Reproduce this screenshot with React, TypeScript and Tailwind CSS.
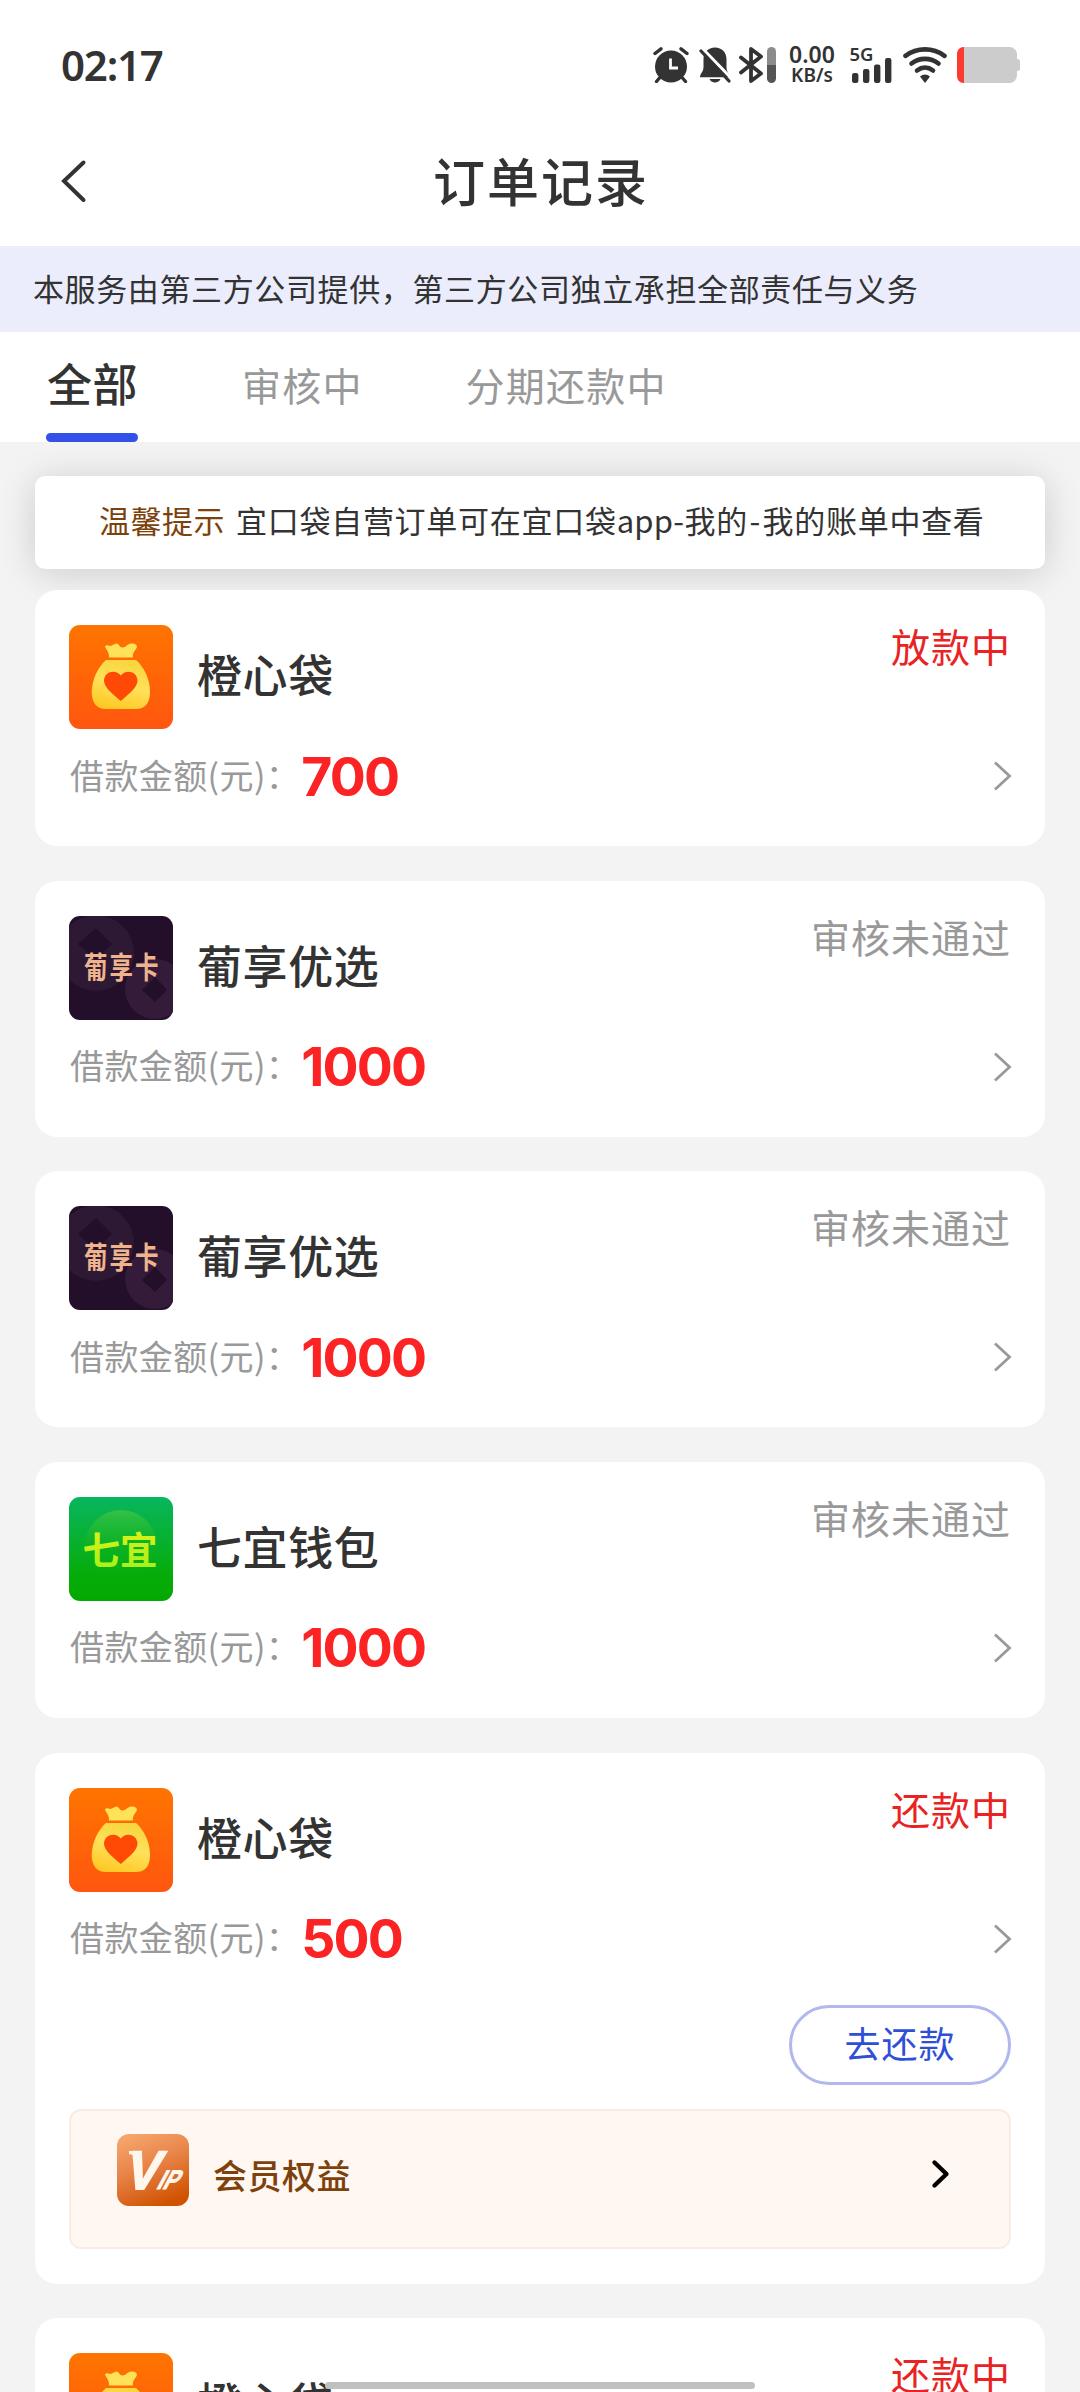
import React from 'react';

type IconKind = 'bag' | 'card' | 'wallet';

interface Order {
  id: string;
  name: string;
  icon: IconKind;
  status: string;
  active: boolean;
  amount: string;
  repay?: boolean;
}

const orders: Order[] = [
  { id: '1', name: '橙心袋', icon: 'bag', status: '放款中', active: true, amount: '700' },
  { id: '2', name: '葡享优选', icon: 'card', status: '审核未通过', active: false, amount: '1000' },
  { id: '3', name: '葡享优选', icon: 'card', status: '审核未通过', active: false, amount: '1000' },
  { id: '4', name: '七宜钱包', icon: 'wallet', status: '审核未通过', active: false, amount: '1000' },
  { id: '5', name: '橙心袋', icon: 'bag', status: '还款中', active: true, amount: '500', repay: true },
  { id: '6', name: '橙心袋', icon: 'bag', status: '还款中', active: true, amount: '500', repay: true },
];

const BagIcon = () => (
  <svg viewBox="0 0 104 104" className="h-[104px] w-[104px] shrink-0">
    <defs>
      <linearGradient id="bagBg" x1="0" y1="0" x2="0" y2="1">
        <stop offset="0" stopColor="#ff7400" />
        <stop offset="1" stopColor="#ff560f" />
      </linearGradient>
      <linearGradient id="bagBody" x1="0.7" y1="0" x2="0.4" y2="1">
        <stop offset="0" stopColor="#f7d53c" />
        <stop offset="0.5" stopColor="#ffe15a" />
        <stop offset="1" stopColor="#ffc926" />
      </linearGradient>
    </defs>
    <rect width="104" height="104" rx="11" fill="url(#bagBg)" />
    <path
      d="M40 32.500 C40.500 28 38 25.500 36.300 22.500 C35.500 20.500 37.500 19.600 39.500 20.600 C43 22 44.500 18.500 47.500 18.500 C50 18.500 50.500 22.500 53.500 22.500 C57 22.500 58.500 18.700 62.500 18.500 C67 18.300 69 21 67.300 23.500 C65 27 63.500 28.500 64 32.500 Z"
      fill="#ffe257"
    />
    <path
      d="M37 35 H67 C75 42 81 54 81 67 C81 78 76 84 67 84 H37 C28 84 22.700 78 22.700 67 C23 54 29 42 37 35 Z"
      fill="url(#bagBody)"
    />
    <path
      d="M51.800 76 C45 70 35 63 35 55.500 C35 46.500 47 43.500 51.800 50.500 C56.500 43.500 68.500 46.500 68.500 55.500 C68.500 63 58.500 70 51.800 76 Z"
      fill="#ff4a05"
    />
  </svg>
);

const CardIcon = () => (
  <svg viewBox="0 0 104 104" className="h-[104px] w-[104px] shrink-0">
    <defs>
      <clipPath id="cardClip">
        <rect width="104" height="104" rx="11" />
      </clipPath>
    </defs>
    <g clipPath="url(#cardClip)">
      <rect width="104" height="104" fill="#230f29" />
      <circle cx="27" cy="37" r="38" fill="#2e1934" />
      <path d="M27 12 L43 28 L27 44 L9 28 Z" fill="#230f29" />
      <circle cx="86" cy="73" r="30" fill="#341b39" />
      <path d="M86 61 L98 74 L86 86 L73 74 Z" fill="#230f29" />
    </g>
    <text
      transform="translate(15 62) scale(1 1.260)"
      fontSize="23.500"
      letterSpacing="2"
      fontWeight="700"
      fill="#efb48d"
      className="font-['Noto_Sans_CJK_SC',sans-serif]"
    >
      葡享卡
    </text>
  </svg>
);

const WalletIcon = () => (
  <svg viewBox="0 0 104 104" className="h-[104px] w-[104px] shrink-0">
    <defs>
      <linearGradient id="walletBg" x1="0" y1="0" x2="0" y2="1">
        <stop offset="0" stopColor="#08b65e" />
        <stop offset="0.750" stopColor="#06ac0a" />
        <stop offset="1" stopColor="#05a800" />
      </linearGradient>
      <linearGradient id="walletDisc" x1="0" y1="0" x2="0" y2="1">
        <stop offset="0" stopColor="#34c148" />
        <stop offset="0.600" stopColor="#10b214" stopOpacity="0.300" />
        <stop offset="1" stopColor="#06ac0a" stopOpacity="0" />
      </linearGradient>
      <linearGradient id="walletText" x1="0" y1="0" x2="0" y2="1">
        <stop offset="0" stopColor="#e9f215" />
        <stop offset="1" stopColor="#9df01c" />
      </linearGradient>
    </defs>
    <rect width="104" height="104" rx="11" fill="url(#walletBg)" />
    <circle cx="52" cy="49" r="36" fill="url(#walletDisc)" />
    <text
      x="13.500"
      y="67"
      fontSize="37.500"
      fontWeight="700"
      fill="url(#walletText)"
      className="font-['Noto_Sans_CJK_SC',sans-serif]"
    >
      七宜
    </text>
  </svg>
);

const VipIcon = () => (
  <svg viewBox="0 0 72 72" className="h-[72px] w-[72px] shrink-0">
    <defs>
      <linearGradient id="vipBg" x1="0.200" y1="0" x2="0.600" y2="1">
        <stop offset="0" stopColor="#f6a66c" />
        <stop offset="0.450" stopColor="#e88449" />
        <stop offset="1" stopColor="#d05200" />
      </linearGradient>
    </defs>
    <rect width="72" height="72" rx="12" fill="url(#vipBg)" />
    <g fill="#fff6ec" stroke="#fff6ec" fontWeight="700" className="font-['Liberation_Sans',sans-serif]">
      <text transform="translate(6 55) skewX(-15)" fontSize="54" textLength="34" lengthAdjust="spacingAndGlyphs" strokeWidth="2">
        V
      </text>
      <text transform="translate(38.500 55) skewX(-28)" fontSize="27" textLength="20" lengthAdjust="spacingAndGlyphs" strokeWidth="1">
        IP
      </text>
    </g>
    <path d="M12 17 H20 V22 L12 20 Z" fill="#fff6ec" />
  </svg>
);

const icons: Record<IconKind, React.ReactNode> = {
  bag: <BagIcon />,
  card: <CardIcon />,
  wallet: <WalletIcon />,
};

const StatusBar = () => (
  <div className="flex h-[130px] items-center justify-between pr-[60px] pl-[61px]">
    <span className="font-['Noto_Sans',sans-serif] text-[42px] leading-[42px] font-semibold tracking-[-1.2px]">
      02:17
    </span>
    <div className="flex items-center">
      {/* Alarm */}
      <svg viewBox="0 0 36 36" className="mr-[10px] h-9 w-9">
        <circle cx="18" cy="19.500" r="16" fill="#333" />
        <path
          d="M2 6.500 L8 1.800 M34 6.500 L28 1.800 M6.500 31 L3.500 34.500 M29.500 31 L32.500 34.500"
          stroke="#333"
          strokeWidth="3.400"
          strokeLinecap="round"
        />
        <path d="M17.500 11.500 V21 H25" fill="none" stroke="#fff" strokeWidth="2.800" />
      </svg>
      {/* Muted bell */}
      <svg viewBox="0 0 32 36" className="mr-2 h-9 w-8">
        <path
          d="M16 0.500 C23 0.500 27.500 5.500 27.500 12 V20 C27.500 25 30.500 26.500 30.500 30.300 H1 C1 26.500 4.500 25 4.500 20 V12 C4.500 5.500 9 0.500 16 0.500 Z M10.500 32 H21.500 C20 36.500 12 36.500 10.500 32 Z"
          fill="#333"
        />
        <path d="M3.500 1.500 L32 31" stroke="#fff" strokeWidth="3" />
        <path d="M2 4 L30 34" stroke="#333" strokeWidth="3.200" strokeLinecap="round" />
      </svg>
      {/* Bluetooth with device level */}
      <svg viewBox="0 0 37 36" className="mr-[12px] h-9 w-[37px]">
        <path
          d="M2 10.500 L22 26.500 L12 34 V2 L22 9.500 L2 25.500"
          fill="none"
          stroke="#333"
          strokeWidth="3.800"
          strokeLinecap="round"
          strokeLinejoin="round"
        />
        <path d="M28 18 V4.500 A4.500 4.500 0 0 1 37 4.500 V18 Z" fill="#8c8c8c" />
        <path d="M28 18 V31.500 A4.500 4.500 0 0 0 37 31.500 V18 Z" fill="#555" />
      </svg>
      <div className="mr-[14px] flex w-[48px] flex-col items-center pb-0.5 font-['Noto_Sans',sans-serif] font-semibold">
        <span className="text-[23px] leading-[21px]">0.00</span>
        <span className="text-[19px] leading-[20px]">KB/s</span>
      </div>
      {/* 5G signal */}
      <svg viewBox="0 0 42 36" className="mr-[11px] h-9 w-[42px]">
        <text x="-0.500" y="14" fontSize="18.500" fontWeight="600" fill="#333" className="font-['Noto_Sans',sans-serif]">
          5G
        </text>
        <rect x="2" y="26" width="6.400" height="10" rx="2.200" fill="#333" />
        <rect x="13" y="22" width="6.400" height="14" rx="2.200" fill="#333" />
        <rect x="24" y="17.500" width="6.400" height="18.500" rx="2.200" fill="#333" />
        <rect x="35" y="11" width="6.400" height="25" rx="2.200" fill="#333" />
      </svg>
      {/* Wifi */}
      <svg viewBox="0 0 44 36" className="mr-[10px] h-9 w-11">
        <g fill="none" stroke="#333" strokeWidth="4.600" strokeLinecap="round">
          <path d="M2.500 8.800 C14 0.200 30 0.200 41.500 8.800" />
          <path d="M8.500 16.500 C16.500 10.300 27.500 10.300 35.500 16.500" />
          <path d="M14 23.500 C19 19.700 25 19.700 30 23.500" />
        </g>
        <path d="M17 29.500 C20 26.800 24 26.800 27 29.500 L22 36 Z" fill="#333" />
      </svg>
      {/* Battery */}
      <svg viewBox="0 0 63 36" className="h-9 w-[63px]">
        <rect x="57" y="12" width="6" height="12" rx="2.500" fill="#ccc" />
        <rect width="60" height="36" rx="7.500" fill="#ccc" />
        <path d="M7 0 V36 C2.500 36 0 33 0 28.500 V7.500 C0 3 2.500 0 7 0 Z" fill="#fb3b30" />
      </svg>
    </div>
  </div>
);

const OrderCard = ({ order }: { order: Order }) => (
  <div className="mb-[34.67px] shrink-0 rounded-[22px] bg-white pt-[35px] pr-[34px] pb-[35px] pl-[34px]">
    <div className="flex h-[104px]">
      {icons[order.icon]}
      <h3 className="ml-6 self-center pb-[6px] text-[45px] leading-[56px] font-medium tracking-[0.6px]">
        {order.name}
      </h3>
      <span
        className={`ml-auto h-[46px] text-[39px] leading-[41px] tracking-[1px] ${
          order.active ? 'text-[#e92323]' : 'text-[#999]'
        }`}
      >
        {order.status}
      </span>
    </div>
    <div className="flex h-[82px] items-center pt-[10px]">
      <span className="pb-px pl-px text-[34px] leading-[40px] tracking-[0.4px] whitespace-nowrap text-[#999]">
        借款金额(元)：
      </span>
      <span className="pt-[3px] pl-px font-['Inter',sans-serif] text-[53.5px] leading-[54px] font-bold tracking-[-1.8px] text-[#fb2323]">
        {order.amount}
      </span>
      <svg viewBox="0 0 20 32" className="-mr-px mt-0.5 ml-auto h-8 w-5">
        <path d="M3 2.500 L17.500 16 L3 29.500" fill="none" stroke="#999" strokeWidth="2.800" />
      </svg>
    </div>
    {order.repay && (
      <div className="flex flex-col items-end">
        <button className="mt-[31px] h-20 w-[222px] rounded-full border-3 border-[#b1b8ec] pb-1.5 text-[36px] leading-[40px] tracking-[1px] text-[#304fd8]">
          去还款
        </button>
        <div className="mt-6 flex h-[140px] w-full items-start rounded-xl border-2 border-[#faece4] bg-[#fff7f1] pt-[23px] pr-[58px] pl-[46px]">
          <VipIcon />
          <span className="mt-[17px] ml-6 text-[34px] leading-[48px] font-medium tracking-[0.5px] text-[#7d420c]">
            会员权益
          </span>
          <svg viewBox="0 0 20 32" className="mt-6 ml-auto h-8 w-5">
            <path
              d="M3.500 4.500 L15.500 16 L3.500 27.500"
              fill="none"
              stroke="#000"
              strokeWidth="4.400"
              strokeLinecap="round"
              strokeLinejoin="round"
            />
          </svg>
        </div>
      </div>
    )}
  </div>
);

const App = () => {
  return (
    <div className="relative flex h-[2392px] w-[1080px] flex-col overflow-hidden bg-[#f3f3f3] font-['Noto_Sans_CJK_SC',sans-serif] text-[#333]">
      <div className="shrink-0 bg-white">
        <StatusBar />
        {/* Title bar */}
        <div className="flex h-[116px] items-center px-[60px]">
          <svg viewBox="0 0 28 44" className="mb-[15px] h-11 w-7">
            <path d="M23.500 3.500 L4 22 L23.500 41" fill="none" stroke="#333" strokeWidth="4" strokeLinecap="round" />
          </svg>
          <h1 className="flex-1 pr-[26px] pb-[17px] text-center text-[52px] leading-[60px] font-medium tracking-[2px]">
            订单记录
          </h1>
        </div>
        <p className="h-[86px] bg-[#ebedfc] pl-[33px] text-[31px] leading-[83px] tracking-[0.620px] whitespace-nowrap">
          本服务由第三方公司提供，第三方公司独立承担全部责任与义务
        </p>
        {/* Tabs */}
        <div className="flex h-[110px] text-[39px] leading-[105px] tracking-[1.200px] text-[#999]">
          <div className="ml-[46px] flex w-[92px] flex-col">
            <span className="h-[101px] pl-px text-[45px] leading-[102px] font-medium tracking-[0.500px] whitespace-nowrap text-[#333]">
              全部
            </span>
            <span className="h-[9px] rounded-[5px] bg-[#3350e8]" />
          </div>
          <span className="ml-[104px]">审核中</span>
          <span className="ml-[103px]">分期还款中</span>
        </div>
      </div>
      <div className="flex flex-1 flex-col overflow-hidden px-[35px] pt-[34px]">
        <div className="mb-[21px] h-[93px] shrink-0 rounded-[10px] bg-white pl-16 text-[31px] leading-[87px] tracking-[0.720px] whitespace-nowrap shadow-[0_4px_36px_rgba(0,0,0,0.16)]">
          <span className="mr-[11px] tracking-[0.5px] text-[#7d420c]">温馨提示</span>
          宜口袋自营订单可在宜口袋<span className="tracking-[0.200px]">app</span>-我的
          <span className="px-[1.500px]">-</span>我的账单中查看
        </div>
        {orders.map((order) => (
          <OrderCard key={order.id} order={order} />
        ))}
      </div>
      {/* Home indicator */}
      <div className="absolute bottom-[3px] left-[325px] h-[7px] w-[430px] rounded-full bg-[#c0c0c0]" />
    </div>
  );
};

export default App;
